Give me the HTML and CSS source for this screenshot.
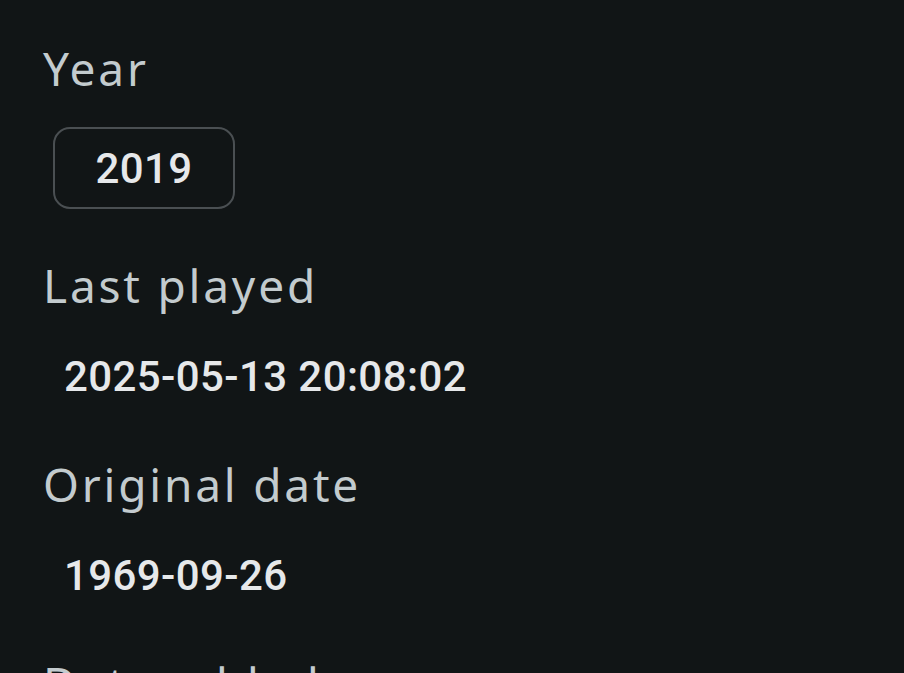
FILE: index.html
```html
<!DOCTYPE html>
<html lang="en">
<head>
	<meta charset="utf-8">
	<meta name="viewport" content="width=device-width, initial-scale=1">
	<title>Track details</title>
	<link rel="stylesheet" href="styles.css">
</head>
<body>
	<div id="details">
		<div class="field field-chip">
			<div class="label">Year</div>
			<span class="chip">2019</span>
		</div>
		<div class="field">
			<div class="label">Last played</div>
			<div class="value">2025-05-13 20:08:02</div>
		</div>
		<div class="field">
			<div class="label">Original date</div>
			<div class="value">1969-09-26</div>
		</div>
		<div class="field">
			<div class="label">Date added</div>
			<div class="value">2025-04-02 18:31:47</div>
		</div>
	</div>
</body>
</html>
```

FILE: styles.css
```css
*{
	margin: 0px;
	box-sizing: border-box;
}
body{
	background-color: #111516;
	color: #e6e8ea;
	overflow: hidden;
	height: 673px;
}
#details{
	padding: 40px 0 0 43px;
	display: flex;
	flex-direction: column;
}
.field{
	display: flex;
	flex-direction: column;
	align-items: flex-start;
	gap: 39px;
	margin-bottom: 54px;
}
.field-chip{
	gap: 31px;
	margin-bottom: 48px;
}
.label{
	font-family: "Noto Sans", sans-serif;
	font-size: 46px;
	line-height: 56px;
	letter-spacing: 2.8px;
	color: #c3cbce;
}
.value{
	font-family: Roboto, sans-serif;
	font-weight: 500;
	font-size: 42px;
	line-height: 50px;
	letter-spacing: 0.4px;
	padding-left: 21px;
}
.chip{
	font-family: Roboto, sans-serif;
	font-weight: 500;
	font-size: 42px;
	letter-spacing: 0.4px;
	display: flex;
	align-items: center;
	justify-content: center;
	margin-left: 10px;
	width: 182px;
	height: 82px;
	border: 2px solid #4a4f52;
	border-radius: 17px;
}
```
